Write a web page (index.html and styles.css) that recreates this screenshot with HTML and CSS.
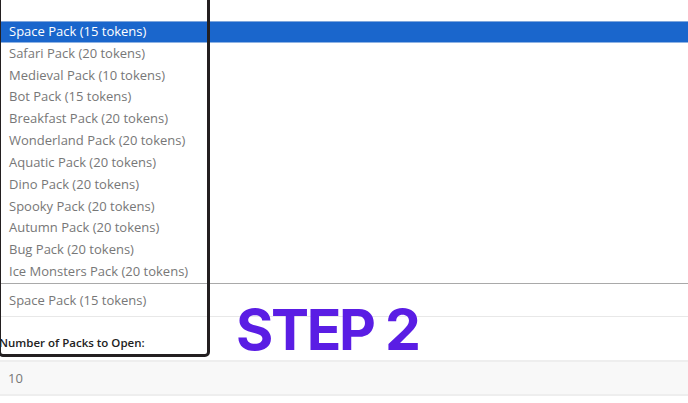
FILE: index.html
```html
<!DOCTYPE html>
<html lang="en">

<head>
  <meta charset="UTF-8">
  <meta name="viewport" content="width=device-width, initial-scale=1.0">
  <title>Open Packs</title>
  <link rel="stylesheet" href="styles.css">
</head>

<body>
  <div class="page">
    <ul class="pack-list">
      <li class="selected">Space Pack (15 tokens)</li>
      <li>Safari Pack (20 tokens)</li>
      <li>Medieval Pack (10 tokens)</li>
      <li>Bot Pack (15 tokens)</li>
      <li>Breakfast Pack (20 tokens)</li>
      <li>Wonderland Pack (20 tokens)</li>
      <li>Aquatic Pack (20 tokens)</li>
      <li>Dino Pack (20 tokens)</li>
      <li>Spooky Pack (20 tokens)</li>
      <li>Autumn Pack (20 tokens)</li>
      <li>Bug Pack (20 tokens)</li>
      <li>Ice Monsters Pack (20 tokens)</li>
    </ul>

    <div class="picked">Space Pack (15 tokens)</div>

    <label class="count-label" for="packCount">Number of Packs to Open:</label>
    <input type="text" id="packCount" class="count-input" value="10" />
  </div>

  <!-- dropdown frame drawn over the list -->
  <div class="frame"></div>

  <h2 class="step">STEP 2</h2>
</body>

</html>
```

FILE: styles.css
```css
body {
  margin: 0;
  font-family: "Open Sans", Arial, sans-serif;
  background: #fff;
  overflow: hidden;
}

.page {
  display: flex;
  flex-direction: column;
}

.pack-list {
  list-style: none;
  margin: 0;
  padding: 21px 0 0;
  border-bottom: 1px solid #a9a9a9;
}

.pack-list li {
  height: 21.84px;
  line-height: 21.84px;
  padding-left: 9px;
  font-size: 13px;
  color: #777;
  white-space: nowrap;
}

.pack-list li.selected {
  background: #1a66cc;
  color: #fff;
  box-shadow: inset 0 1px 0 #7fa6dc, inset 0 -1px 0 #8fb3e4;
}

.picked {
  height: 32px;
  line-height: 32px;
  padding-left: 9px;
  font-size: 13px;
  color: #777;
  border-bottom: 1px solid #e8e8e8;
}

.count-label {
  display: block;
  margin: 17px 0 0 -1px;
  font-size: 11.5px;
  font-weight: 600;
  color: #222;
  line-height: 18px;
}

.count-input {
  margin-top: 8px;
  height: 36px;
  padding: 0 8px;
  border: none;
  border-top: 2px solid #eee;
  border-bottom: 2px solid #eee;
  background: #f8f8f8;
  font-family: inherit;
  font-size: 13px;
  color: #777;
  box-sizing: border-box;
  outline: none;
}

.frame {
  position: absolute;
  left: -2px;
  top: -10px;
  width: 212px;
  height: 367px;
  box-sizing: border-box;
  border: 3px solid #231f20;
  border-radius: 0 0 5px 5px;
  pointer-events: none;
}

.step {
  position: absolute;
  left: 236px;
  top: 292px;
  margin: 0;
  font-family: Inter, "Open Sans", sans-serif;
  font-size: 57px;
  font-weight: 700;
  letter-spacing: -2.3px;
  line-height: 76px;
  color: #5a1de4;
}
```
